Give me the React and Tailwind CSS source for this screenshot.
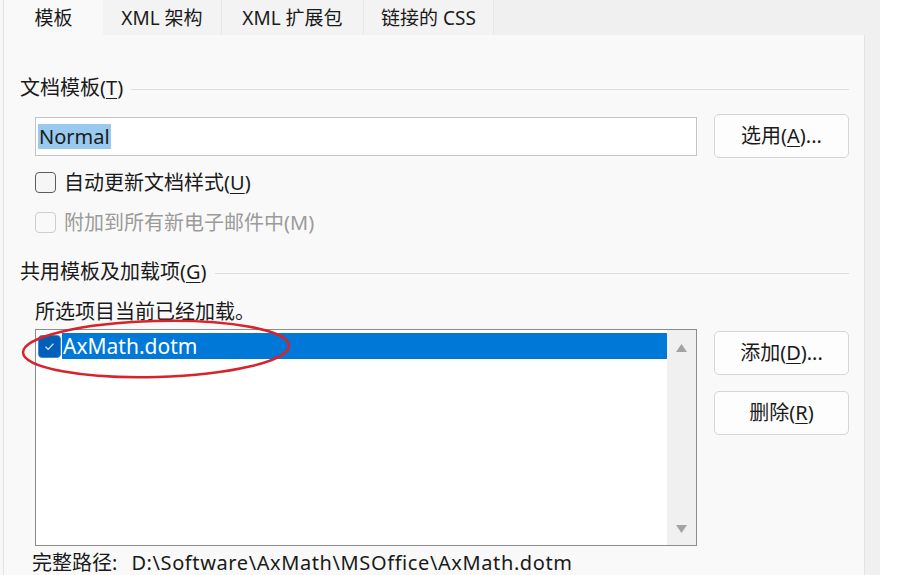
const font = { fontFamily: '"Noto Sans", "Noto Sans CJK SC", sans-serif' };

function U({ children }) {
  return <span className="underline underline-offset-[3px] decoration-1">{children}</span>;
}

function GroupHeader({ children }) {
  return (
    <div className="flex items-center h-6">
      <span className="whitespace-nowrap">{children}</span>
      <div className="flex-1 h-px bg-[#dedede] ml-2 mt-[2px]"></div>
    </div>
  );
}

function Button({ children, className = "" }) {
  return (
    <button
      className={"w-[135px] h-[44px] rounded-[5px] border border-[#d6d6d6] bg-[#fdfdfd] text-[#1a1a1a] flex items-center justify-center " + className}
    >
      {children}
    </button>
  );
}

function Tab({ label, width, active }) {
  return (
    <div
      className={
        "h-[35px] flex items-center justify-center " +
        (active ? "bg-[#f9f9f9] border-l border-[#e3e3e3]" : "bg-[#f3f3f3] border-r border-[#e8e8e8]")
      }
      style={{ width }}
    >
      {label}
    </div>
  );
}

export default function App() {
  return (
    <div className="w-[900px] h-[575px] bg-[#f0f0f0] flex overflow-hidden relative text-[20px] leading-6 text-[#1a1a1a]" style={font}>
      <div className="w-[3px] bg-[#f7f7f7]"></div>
      <div className="w-[862px] flex flex-col">
        <div className="flex h-[35px] text-[19px]">
          <Tab label="模板" width={100} active />
          <Tab label="XML 架构" width={119} />
          <Tab label="XML 扩展包" width={142} />
          <Tab label="链接的 CSS" width={130} />
        </div>
        <div className="flex-1 bg-[#f9f9f9] border-l border-r border-[#e3e3e3] pl-[16px] pr-[15px] pt-[41px]">
          <GroupHeader>
            文档模板(<U>T</U>)
          </GroupHeader>

          <div className="flex items-center mt-[14px] pl-[15px] gap-[17px]">
            <div className="flex-1 h-[39px] bg-white border border-[#c4c4c4] flex items-center pl-[2px]">
              <span className="bg-[#99c9ef] px-[1px] leading-[25px] text-[20px]">Normal</span>
            </div>
            <Button>
              选用(<U>A</U>)...
            </Button>
          </div>

          <div className="flex items-center mt-[14px] pl-[15px] h-[21px]">
            <div className="w-[21px] h-[21px] rounded-[4px] border border-[#5c5c5c] bg-[#f6f6f6]"></div>
            <span className="ml-[8px]">
              自动更新文档样式(<U>U</U>)
            </span>
          </div>

          <div className="flex items-center mt-[19px] pl-[15px] h-[21px] text-[#9b9b9b]">
            <div className="w-[21px] h-[21px] rounded-[4px] border border-[#cfcfcf] bg-[#f9f9f9]"></div>
            <span className="ml-[8px]">附加到所有新电子邮件中(M)</span>
          </div>

          <div className="mt-[27px]">
            <GroupHeader>
              共用模板及加载项(<U>G</U>)
            </GroupHeader>
          </div>

          <div className="pl-[15px] mt-[16px] h-6">所选项目当前已经加载。</div>

          <div className="flex items-start mt-[5px] pl-[15px] gap-[17px]">
            <div className="flex-1 h-[217px] bg-white border border-[#8c8c8c] flex">
              <div className="flex-1 pt-[3px] pl-[2px]">
                <div className="flex items-center h-[26px]">
                  <div className="w-[23px] h-[23px] rounded-[4px] bg-[#005fb8] border border-[#3d8ad6] flex items-center justify-center">
                    <svg width="13" height="13" viewBox="0 0 13 13" fill="none">
                      <path d="M2.5 6.8 L5.2 9.4 L10.5 3.6" stroke="#dfe9f5" strokeWidth="1.3" />
                    </svg>
                  </div>
                  <div className="flex-1 h-[26px] bg-[#0078d7] text-white text-[21px] leading-[26px] pl-[1px] ml-[1px]">
                    AxMath.dotm
                  </div>
                </div>
              </div>
              <div className="w-[29px] bg-[#f0f0f0] flex flex-col items-center justify-between pt-[14px] pb-[12px]">
                <svg width="11" height="8" viewBox="0 0 11 8">
                  <path d="M5.5 0 L11 8 L0 8 Z" fill="#a3a3a3" />
                </svg>
                <svg width="11" height="8" viewBox="0 0 11 8">
                  <path d="M0 0 L11 0 L5.5 8 Z" fill="#a3a3a3" />
                </svg>
              </div>
            </div>
            <div className="flex flex-col gap-[16px] mt-[2px]">
              <Button>
                添加(<U>D</U>)...
              </Button>
              <Button>
                删除(<U>R</U>)
              </Button>
            </div>
          </div>

          <div className="flex mt-[7px] h-5 leading-5 pl-[12px]">
            <span>完整路径:</span>
            <span className="ml-[14px] tracking-[0.6px]">D:\Software\AxMath\MSOffice\AxMath.dotm</span>
          </div>
        </div>
      </div>
      <div className="w-[15px] bg-[#f0f0f0]"></div>
      <div className="flex-1 bg-white"></div>

      <svg className="absolute left-0 top-0 pointer-events-none" width="900" height="575">
        <ellipse cx="156" cy="349" rx="133" ry="28" fill="none" stroke="#d8232a" strokeWidth="2.5" transform="rotate(-1.5 156 349)" />
      </svg>
    </div>
  );
}
